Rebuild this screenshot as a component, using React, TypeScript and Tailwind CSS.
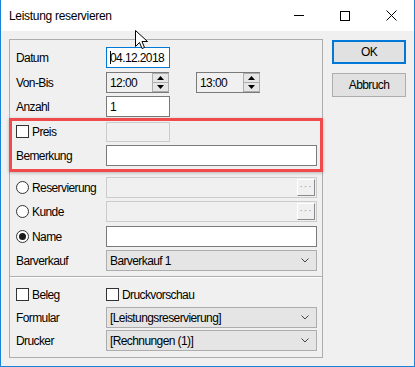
import React from 'react';

const font = { fontFamily: '"Liberation Sans", Arial, sans-serif' };

function Label({ children }: { children: React.ReactNode }) {
  return <div className="w-[90px] shrink-0 tracking-[-0.6px]">{children}</div>;
}

function TextBox({ value, width, focused }: { value?: string; width: string; focused?: boolean }) {
  return (
    <div
      className={`${width} h-[21px] bg-white border flex items-center pl-[3px] tracking-[-0.6px] ${
        focused ? 'border-[#0078d7]' : 'border-[#7a7a7a]'
      }`}
    >
      {focused && <span className="w-px h-[13px] bg-black mr-[-1px]" />}
      {value}
    </div>
  );
}

function TimeBox({ value, width }: { value: string; width: string }) {
  return (
    <div className={`${width} h-[21px] flex border-l border-t border-b border-[#7a7a7a] bg-[#f0f0f0]`}>
      <div className="flex-1 flex items-center pl-[3px] tracking-[-0.6px]">{value}</div>
      <div className="w-[17px] flex flex-col border border-[#adadad] bg-[#f0f0f0]">
        <div className="flex-1 flex items-center justify-center border-b border-[#adadad] bg-[#e6e6e6]">
          <svg width="7" height="4" viewBox="0 0 7 4"><path d="M3.5 0L7 4H0z" fill="#000" /></svg>
        </div>
        <div className="flex-1 flex items-center justify-center bg-[#e6e6e6]">
          <svg width="7" height="4" viewBox="0 0 7 4"><path d="M0 0h7L3.5 4z" fill="#000" /></svg>
        </div>
      </div>
    </div>
  );
}

function Combo({ value }: { value: string }) {
  return (
    <div className="w-[211px] h-[21px] bg-[#e5e5e5] border border-[#adadad] flex items-center pl-[3px] pr-[7px] tracking-[-0.6px]">
      <span className="flex-1">{value}</span>
      <svg width="8" height="5" viewBox="0 0 8 5"><path d="M0.5 0.5L4 4L7.5 0.5" fill="none" stroke="#444" strokeWidth="1" /></svg>
    </div>
  );
}

function Picker({ disabled }: { disabled?: boolean }) {
  return (
    <div
      className={`w-[211px] h-[21px] border flex items-center justify-end pr-[1px] ${
        disabled ? 'bg-[#f0f0f0] border-[#cccccc]' : 'bg-white border-[#7a7a7a]'
      }`}
    >
      <div className="w-[18px] h-[17px] bg-[#f0f0f0] border-t border-l border-white border-r border-b border-r-[#8a8a8a] border-b-[#8a8a8a] flex items-center justify-center text-[#9a9a9a] text-[10px] leading-none tracking-[1px] pb-[1px]">
        ···
      </div>
    </div>
  );
}

function CheckBox() {
  return <div className="w-[13px] h-[13px] border border-[#333333] bg-white shrink-0" />;
}

function Radio({ checked }: { checked?: boolean }) {
  return (
    <div className="w-[13px] h-[13px] rounded-full border border-[#333333] bg-white shrink-0 flex items-center justify-center">
      {checked && <div className="w-[7px] h-[7px] rounded-full bg-[#1a1a1a]" />}
    </div>
  );
}

export default function App() {
  return (
    <div style={font} className="relative w-[415px] h-[367px] bg-[#f0f0f0] border-x border-b border-[#1883d7] text-[12px] text-black overflow-hidden">
      {/* Title bar */}
      <div className="h-[31px] bg-white flex items-center">
        <div className="pl-[8px] flex-1 tracking-[-0.3px]">Leistung reservieren</div>
        <div className="flex items-center h-full">
          <div className="w-[46px] h-full flex items-center justify-center">
            <div className="w-[10px] h-px bg-black" />
          </div>
          <div className="w-[46px] h-full flex items-center justify-center">
            <div className="w-[10px] h-[10px] border border-black" />
          </div>
          <div className="w-[46px] h-full flex items-center justify-center">
            <svg width="11" height="11" viewBox="0 0 11 11">
              <path d="M0.5 0.5L10.5 10.5M10.5 0.5L0.5 10.5" stroke="#000" strokeWidth="1" />
            </svg>
          </div>
        </div>
      </div>

      {/* Body */}
      <div className="flex pl-[8px] pt-[8px]">
        <div className="w-[314px] h-[319px] border border-[#adadad] pl-[6px] pr-[5px] pt-[7px] flex flex-col">
          <div className="flex items-center h-[21px]">
            <Label>Datum</Label>
            <TextBox value="04.12.2018" width="w-[64px]" focused />
          </div>
          <div className="flex items-center h-[21px] mt-[4px]">
            <Label>Von-Bis</Label>
            <TimeBox value="12:00" width="w-[63px]" />
            <div className="w-[27px]" />
            <TimeBox value="13:00" width="w-[64px]" />
          </div>
          <div className="flex items-center h-[21px] mt-[3px]">
            <Label>Anzahl</Label>
            <TextBox value="1" width="w-[64px]" />
          </div>
          <div className="flex items-center h-[21px] mt-[4px]">
            <div className="w-[90px] flex items-center gap-[3px]">
              <CheckBox />
              <span className="tracking-[-0.6px]">Preis</span>
            </div>
            <div className="w-[64px] h-[20px] border border-[#cccccc] bg-[#f0f0f0]" />
          </div>
          <div className="flex items-center h-[21px] mt-[3px]">
            <Label>Bemerkung</Label>
            <TextBox width="w-[211px]" />
          </div>

          <div className="flex items-center h-[21px] mt-[11px]">
            <div className="w-[90px] flex items-center gap-[3px]">
              <Radio />
              <span className="tracking-[-0.6px]">Reservierung</span>
            </div>
            <Picker disabled />
          </div>
          <div className="flex items-center h-[21px] mt-[3px]">
            <div className="w-[90px] flex items-center gap-[3px]">
              <Radio />
              <span className="tracking-[-0.6px]">Kunde</span>
            </div>
            <Picker disabled />
          </div>
          <div className="flex items-center h-[21px] mt-[4px]">
            <div className="w-[90px] flex items-center gap-[3px]">
              <Radio checked />
              <span className="tracking-[-0.6px]">Name</span>
            </div>
            <TextBox width="w-[211px]" />
          </div>
          <div className="flex items-center h-[21px] mt-[3px]">
            <Label>Barverkauf</Label>
            <Combo value="Barverkauf 1" />
          </div>

          <div className="-ml-[6px] -mr-[5px] mt-[5px] h-[2px] border-t border-[#adadad] border-b border-b-white" />

          <div className="flex items-center h-[21px] mt-[6px]">
            <div className="w-[90px] flex items-center gap-[3px]">
              <CheckBox />
              <span className="tracking-[-0.6px]">Beleg</span>
            </div>
            <div className="flex items-center gap-[3px]">
              <CheckBox />
              <span className="tracking-[-0.6px]">Druckvorschau</span>
            </div>
          </div>
          <div className="flex items-center h-[21px] mt-[2px]">
            <Label>Formular</Label>
            <Combo value="[Leistungsreservierung]" />
          </div>
          <div className="flex items-center h-[21px] mt-[2px]">
            <Label>Drucker</Label>
            <Combo value="[Rechnungen (1)]" />
          </div>
        </div>

        <div className="ml-[9px] pt-[1px] flex flex-col">
          <div className="w-[74px] h-[24px] border-2 border-[#0078d7] bg-[#e1e1e1] flex items-center justify-center tracking-[-0.6px]">
            OK
          </div>
          <div className="w-[74px] h-[24px] mt-[9px] border border-[#adadad] bg-[#e1e1e1] flex items-center justify-center tracking-[-0.6px]">
            Abbruch
          </div>
        </div>
      </div>

      {/* red annotation frame */}
      <div className="absolute left-[8px] top-[118px] w-[314px] h-[54px] border-[3px] border-[#f04a4a] shadow-[0_1px_3px_rgba(0,0,0,0.25)]" />

      {/* mouse cursor */}
      <svg className="absolute left-[134px] top-[30px]" width="13" height="20" viewBox="0 0 13 20">
        <path
          d="M0.5 0.5V16.5L4.5 12.5L7 18.5L9.5 17.5L7 11.5H12.5Z"
          fill="#fff"
          stroke="#000"
          strokeWidth="1"
          strokeLinejoin="miter"
        />
      </svg>
    </div>
  );
}
